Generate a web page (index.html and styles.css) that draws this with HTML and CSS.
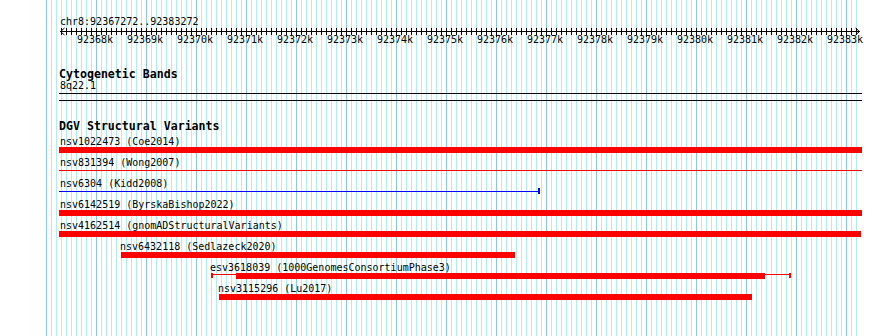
FILE: index.html
```html
<!DOCTYPE html>
<html lang="en">
<head>
  <meta charset="UTF-8">
  <meta name="viewport" content="width=device-width, initial-scale=1.0">
  <title>chr8:92367272..92383272</title>
  <link rel="stylesheet" href="styles.css">
</head>
<body>

<div class="view">

  <!-- RULER -->
  <div class="ruler">
    <div class="locus">chr8:92367272..92383272</div>
    <svg class="scale" width="820" height="20" viewBox="46 0 820 20">
      <defs>
        <pattern id="minor" x="46" y="0" width="5" height="20" patternUnits="userSpaceOnUse">
          <rect x="0" y="1" width="1" height="7" fill="#000"/>
        </pattern>
        <pattern id="major" x="46" y="0" width="50" height="20" patternUnits="userSpaceOnUse">
          <rect x="0" y="1" width="1" height="9" fill="#000"/>
        </pattern>
      </defs>
      <rect x="61" y="0" width="797" height="10" fill="url(#minor)"/>
      <rect x="61" y="0" width="797" height="10" fill="url(#major)"/>
      <rect x="60" y="4" width="800" height="1" fill="#000"/>
      <path d="M64.5 1 L60.5 4.5 L64.5 8 M855.5 1 L859.5 4.5 L855.5 8" fill="none" stroke="#000" stroke-width="1"/>
      <g class="ticks" text-anchor="middle">
        <text x="95" y="16">92368k</text>
        <text x="145" y="16">92369k</text>
        <text x="195" y="16">92370k</text>
        <text x="245" y="16">92371k</text>
        <text x="295" y="16">92372k</text>
        <text x="345" y="16">92373k</text>
        <text x="395" y="16">92374k</text>
        <text x="445" y="16">92375k</text>
        <text x="495" y="16">92376k</text>
        <text x="545" y="16">92377k</text>
        <text x="595" y="16">92378k</text>
        <text x="645" y="16">92379k</text>
        <text x="695" y="16">92380k</text>
        <text x="745" y="16">92381k</text>
        <text x="795" y="16">92382k</text>
        <text x="845" y="16">92383k</text>
      </g>
    </svg>
  </div>

  <!-- CYTOGENETIC BANDS -->
  <div class="track cytobands">
    <h2 class="track-title">Cytogenetic Bands</h2>
    <div class="band-label">8q22.1</div>
    <div class="band"></div>
  </div>

  <!-- DGV -->
  <div class="track dgv">
    <h2 class="track-title">DGV Structural Variants</h2>
    <div class="features">
      <div class="feature">
        <div class="feature-label" style="padding-left:14px">nsv1022473 (Coe2014)</div>
        <div class="glyph"><div class="bar" style="margin-left:13px;width:803px"></div></div>
      </div>
      <div class="feature">
        <div class="feature-label" style="padding-left:14px">nsv831394 (Wong2007)</div>
        <div class="glyph"><div class="line" style="margin-left:13px;width:803px"></div></div>
      </div>
      <div class="feature">
        <div class="feature-label" style="padding-left:14px">nsv6304 (Kidd2008)</div>
        <div class="glyph">
          <div class="span blue" style="margin-left:13px;width:481px">
            <div class="line"></div>
            <div class="cap cap-end"></div>
          </div>
        </div>
      </div>
      <div class="feature">
        <div class="feature-label" style="padding-left:14px">nsv6142519 (ByrskaBishop2022)</div>
        <div class="glyph"><div class="bar" style="margin-left:13px;width:803px"></div></div>
      </div>
      <div class="feature">
        <div class="feature-label" style="padding-left:14px">nsv4162514 (gnomADStructuralVariants)</div>
        <div class="glyph"><div class="bar" style="margin-left:13px;width:802px"></div></div>
      </div>
      <div class="feature">
        <div class="feature-label" style="padding-left:74px">nsv6432118 (Sedlazeck2020)</div>
        <div class="glyph"><div class="bar" style="margin-left:75px;width:394px"></div></div>
      </div>
      <div class="feature">
        <div class="feature-label" style="padding-left:164px">esv3618039 (1000GenomesConsortiumPhase3)</div>
        <div class="glyph">
          <div class="span red" style="margin-left:165px;width:580px">
            <div class="line"></div>
            <div class="cap cap-start"></div>
            <div class="core" style="left:25px;width:529px"></div>
            <div class="cap cap-end"></div>
          </div>
        </div>
      </div>
      <div class="feature">
        <div class="feature-label" style="padding-left:172px">nsv3115296 (Lu2017)</div>
        <div class="glyph"><div class="bar" style="margin-left:173px;width:533px"></div></div>
      </div>
    </div>
  </div>

</div>

</body>
</html>
```

FILE: styles.css
```css
body {
  margin: 0;
  background: #fff;
  color: #000;
  font-family: "DejaVu Sans Mono", monospace;
  font-size: 10px;
  line-height: 11px;
}

/* AREA COM A GRADE */
.view {
  margin-left: 46px;
  width: 811px;
  height: 336px;
  background-image:
    linear-gradient(to right, #88c6ec 1px, transparent 1px),
    linear-gradient(to right, #afeeee 1px, transparent 1px);
  background-size: 50px 100%, 5px 100%;
}

/* REGUA */
.ruler { padding-top: 16px; }
.locus { padding-left: 14px; }
.scale { display: block; overflow: visible; }
.ticks { font-family: "DejaVu Sans Mono", monospace; font-size: 10px; }

/* TRILHAS */
.track-title {
  margin: 0;
  padding-left: 13px;
  font-size: 11.6px;
  font-weight: bold;
  line-height: 12px;
}

.cytobands { margin-top: 21px; }
.band-label { padding-left: 14px; }
.band {
  margin: 2px 0 0 13px;
  width: 803px;
  height: 6px;
  border-top: 1px solid #000;
  border-bottom: 1px solid #000;
}

.dgv { margin-top: 19px; }
.features { margin-top: 4px; }
.feature { height: 21px; }
.feature-label { white-space: nowrap; height: 11px; }
.glyph { height: 10px; }

.bar { height: 6px; background: #f00; }
.glyph > .line { height: 1px; margin-top: 2px; background: #f00; }

.span { position: relative; height: 6px; }
.span .line { position: absolute; left: 0; right: 0; height: 1px; }
.span .cap { position: absolute; width: 2px; }
.span .core { position: absolute; top: 0; height: 6px; background: #f00; }
.cap-start { left: 0; }
.cap-end { right: 0; }

.blue .line { top: 2px; background: #00f; }
.blue .cap { top: -1px; height: 6px; background: #00f; }
.red .line { top: 1px; background: #f00; }
.red .cap { top: 0; height: 5px; background: #f00; }
```
